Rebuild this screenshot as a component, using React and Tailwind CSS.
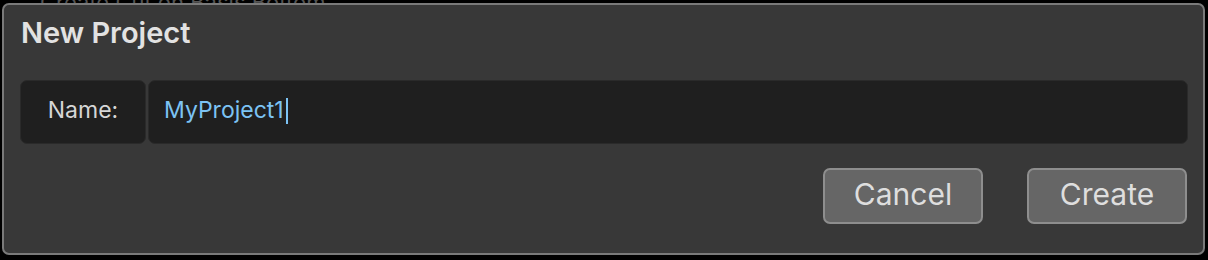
export default function App() {
  return (
    <div className="relative w-[1208px] h-[260px] bg-black overflow-hidden font-['Inter',sans-serif]">
      {/* text of the window behind, mostly hidden */}
      <div className="absolute left-[40px] -top-[14px] text-[22px] text-[#555] whitespace-nowrap">
        Create Cut on Basis Bottom
      </div>
      <div className="relative ml-[2px] mt-[3px] w-[1203px] h-[252px] rounded-[7px] border-2 border-[#7a7a7a] bg-[#383838] flex flex-col">
        <h1 className="pl-[17px] pt-[11px] text-[29px] font-semibold leading-[34px] text-[#e2e2e2]">
          New Project
        </h1>
        <div className="mt-[30px] ml-[16px] flex gap-[2px] h-[64px]">
          <div className="w-[126px] pb-[4px] rounded-[7px] bg-[#1f1f1f] border border-[#2a2a2a] flex items-center justify-center text-[23px] text-[#d6d6d6]">
            Name:
          </div>
          <div className="w-[1040px] pb-[4px] rounded-[7px] bg-[#1f1f1f] border border-[#2a2a2a] flex items-center pl-[15px] text-[23px] text-[#7cc3f4]">
            MyProject1
            <span className="ml-[2px] mt-[2px] w-[2px] h-[26px] bg-[#7cc3f4]" />
          </div>
        </div>
        <div className="mt-[24px] mr-[16px] flex justify-end gap-[44px]">
          <button className="w-[160px] h-[56px] pb-[4px] rounded-[7px] border-2 border-[#8e8e8e] bg-[#666666] text-[30px] text-[#dedede]">
            Cancel
          </button>
          <button className="w-[160px] h-[56px] pb-[4px] rounded-[7px] border-2 border-[#8e8e8e] bg-[#666666] text-[30px] text-[#dedede]">
            Create
          </button>
        </div>
      </div>
    </div>
  );
}
